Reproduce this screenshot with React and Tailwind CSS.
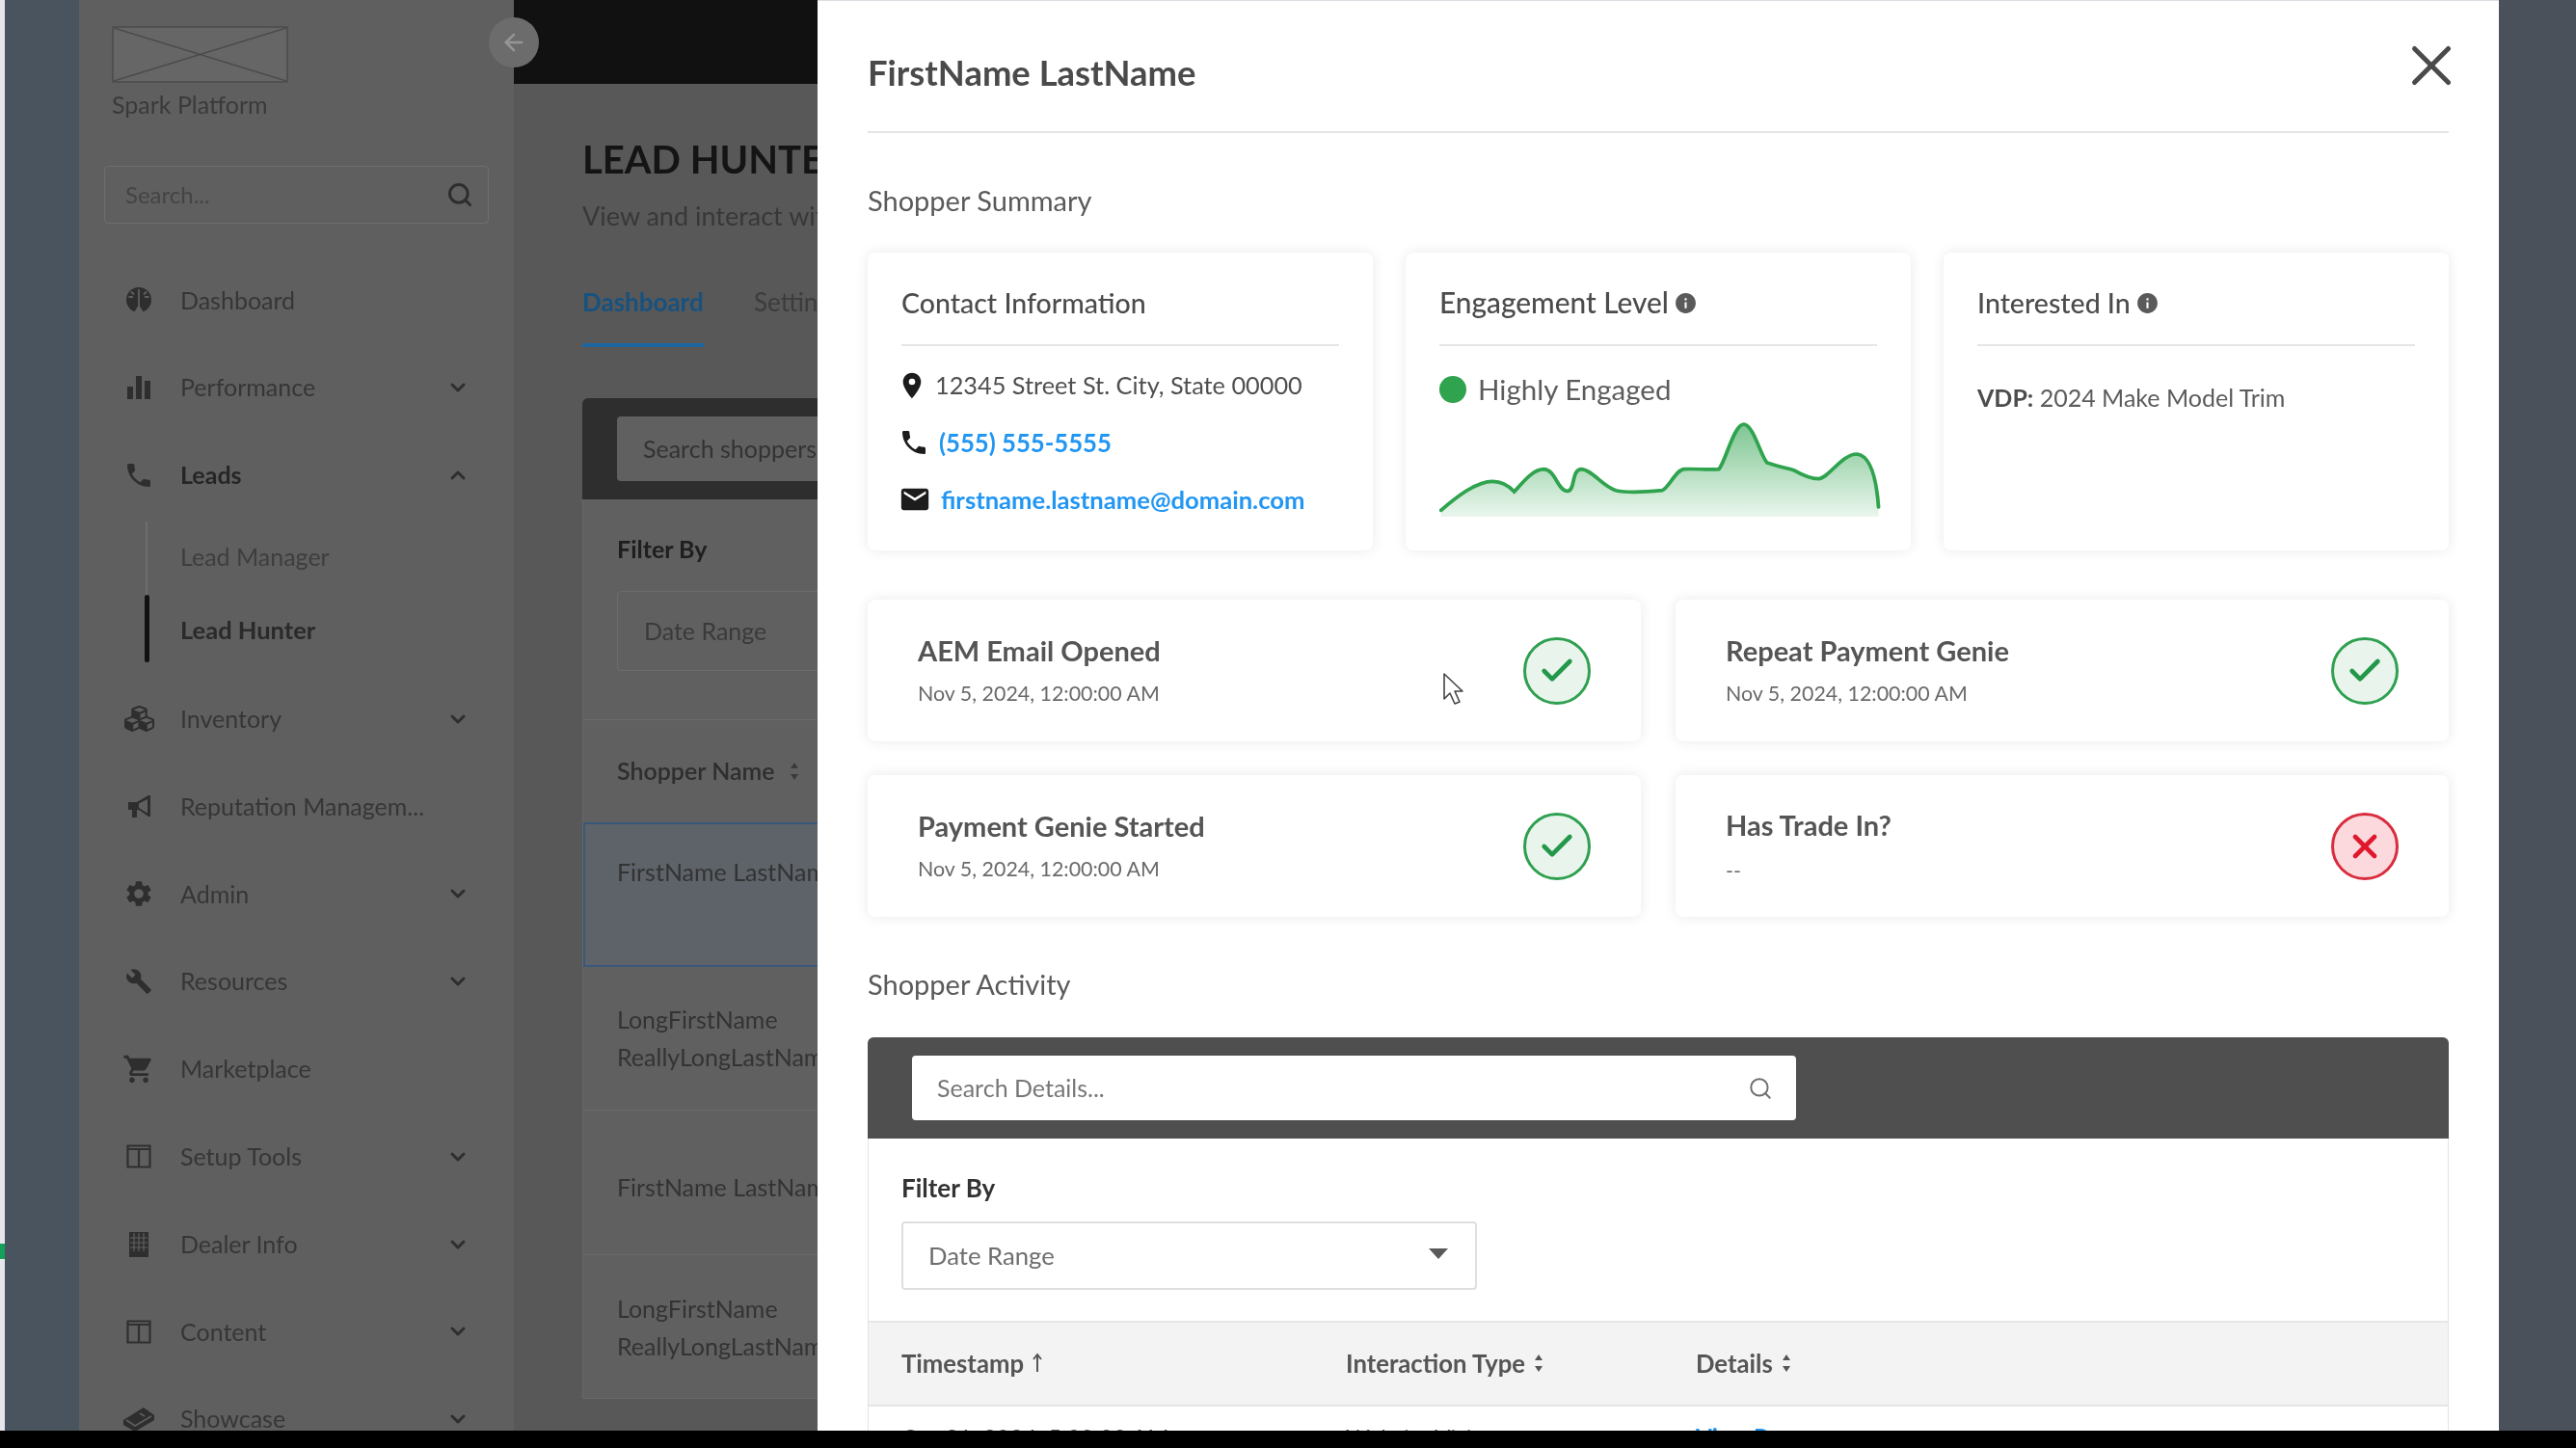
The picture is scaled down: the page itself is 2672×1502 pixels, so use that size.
import React from "react";
import { ChevronDown, ChevronUp, Search, X, ArrowLeft, Check } from "lucide-react";
import { FaCubes } from "react-icons/fa";
import { MdPhone, MdLocationOn, MdEmail, MdInfo, MdSettings, MdBuild, MdShoppingCart } from "react-icons/md";

const GaugeIcon = () => (
  <svg width="28" height="28" viewBox="0 0 28 28">
    <circle cx="14" cy="14" r="13" fill="#2e2e2e" />
    <path d="M14 3 V14 L14 24 M3.5 11 H8 M24.5 11 H20 M6 5.5 L9 8.5 M22 5.5 L19 8.5" stroke="#5f5f5f" strokeWidth="1.8" fill="none" />
    <path d="M9 27 L14 19 L19 27 Z" fill="#5f5f5f" />
  </svg>
);
const BarsIcon = () => (
  <svg width="26" height="26" viewBox="0 0 26 26">
    <path d="M1 12 H7 V25 H1 Z M10 1 H16 V25 H10 Z M19 6 H25 V25 H19 Z" fill="#2e2e2e" />
  </svg>
);
const PhoneIcon = () => <MdPhone size={32} />;
const CubesIcon = () => <FaCubes size={31} />;
const HornIcon = () => (
  <svg width="26" height="26" viewBox="0 0 26 26">
    <path fillRule="evenodd" d="M2 8 H11 L23 1 H25 V23 H23 L13 16 H11 V24 H6 V16 H2 Z M13 9.5 V14 L22 19.5 V5 Z" fill="#2e2e2e" />
  </svg>
);
const CogIcon = () => <MdSettings size={32} />;
const WrenchIcon = () => <MdBuild size={28} />;
const CartIcon = () => <MdShoppingCart size={34} />;
const ColumnsIcon = () => (
  <svg width="26" height="25" viewBox="0 0 26 25">
    <path d="M1.5 1.5 H24.5 V23.5 H1.5 Z M13 4 V23.5 M1.5 5 H24.5" stroke="#303030" strokeWidth="2.2" fill="none" />
  </svg>
);
const BuildingIcon = () => (
  <svg width="22" height="26" viewBox="0 0 22 26">
    <rect x="1" y="0" width="20" height="26" fill="#2e2e2e" />
    <path d="M6 1 V20 M11 1 V20 M16 1 V20 M2 6 H20 M2 11 H20 M2 16 H20" stroke="#5f5f5f" strokeWidth="1.2" />
  </svg>
);
const BoxIcon = () => (
  <svg width="34" height="28" viewBox="0 0 34 28">
    <path d="M1 15 L22 2 L33 10 V15 L13 27 L1 20 Z" fill="#2e2e2e" />
    <path d="M4 15 L13 21 L30 11 M18 8 L23 11" stroke="#5f5f5f" strokeWidth="1.6" fill="none" />
  </svg>
);

function NavRow({ icon: Icon, label, chevron, bold }) {
  return (
    <div className="flex h-[90.8px] w-[382px] shrink-0 items-center">
      <div className="ml-[16px] flex h-[36px] w-[40px] items-center justify-center text-[#2e2e2e]">
        <Icon />
      </div>
      <div className={`ml-[23px] flex-1 text-[25px] whitespace-nowrap ${bold ? "font-bold text-[#262626]" : "text-[#363636]"}`}>{label}</div>
      {chevron === "down" && <ChevronDown size={24} strokeWidth={3} className="mr-[3px] text-[#2e2e2e]" />}
      {chevron === "up" && <ChevronUp size={24} strokeWidth={3} className="mr-[3px] text-[#2e2e2e]" />}
    </div>
  );
}

function Sidebar() {
  return (
    <aside className="flex h-full w-[451px] shrink-0 flex-col overflow-hidden bg-[#5f5f5f] pl-[26px] pt-[27px]">
      <div className="ml-[8px] h-[59px] w-[183px] shrink-0 border-2 border-[#505050] bg-[#666666]">
        <svg className="h-full w-full" viewBox="0 0 183 59" preserveAspectRatio="none">
          <path d="M0 0 L183 59 M183 0 L0 59" stroke="#4a4a4a" strokeWidth="1.5" fill="none" />
        </svg>
      </div>
      <div className="ml-[8px] mt-[6px] h-[32px] shrink-0 text-[25px] leading-[32px] text-[#3a3a3a]">Spark Platform</div>
      <div className="mt-[48px] flex h-[60px] w-[399px] shrink-0 items-center justify-between rounded border border-[#6e6e6e] pl-[21px] pr-[15px]">
        <span className="text-[24px] text-[#444444]">Search...</span>
        <Search size={28} strokeWidth={2.6} className="text-[#2e2e2e]" />
      </div>
      <div className="mt-[34px] shrink-0">
        <NavRow icon={GaugeIcon} label="Dashboard" />
        <NavRow icon={BarsIcon} label="Performance" chevron="down" />
        <NavRow icon={PhoneIcon} label="Leads" chevron="up" bold />
      </div>
      <div className="relative mb-[10px] mt-[3px] h-[149px] w-[382px] shrink-0">
        <div className="ml-[43px] h-[76px] w-[2px] bg-[#6e6e6e]" />
        <div className="ml-[42px] h-[70px] w-[5px] rounded-sm bg-[#111111]" />
        <div className="absolute left-[79px] top-[15px] text-[25px] leading-[42px] text-[#3e3e3e]">Lead Manager</div>
        <div className="absolute left-[79px] top-[91px] text-[25.5px] font-bold leading-[42px] text-[#2a2a2a]">Lead Hunter</div>
      </div>
      <NavRow icon={CubesIcon} label="Inventory" chevron="down" />
      <NavRow icon={HornIcon} label="Reputation Managem..." />
      <NavRow icon={CogIcon} label="Admin" chevron="down" />
      <NavRow icon={WrenchIcon} label="Resources" chevron="down" />
      <NavRow icon={CartIcon} label="Marketplace" />
      <NavRow icon={ColumnsIcon} label="Setup Tools" chevron="down" />
      <NavRow icon={BuildingIcon} label="Dealer Info" chevron="down" />
      <NavRow icon={ColumnsIcon} label="Content" chevron="down" />
      <NavRow icon={BoxIcon} label="Showcase" chevron="down" />
    </aside>
  );
}

function SortArrows({ className = "" }) {
  return (
    <svg width="12" height="22" viewBox="0 0 12 22" className={className}>
      <path d="M6 2 L10 8 H2 Z M6 20 L10 14 H2 Z" fill="currentColor" />
    </svg>
  );
}

function LeadRow({ lines, selected, pad }) {
  return (
    <div className={`h-[149.6px] w-[300px] ${selected ? "border-2 border-[#39587a] bg-[#5d6369] pl-[33px]" : "border-b border-[#6a6a6a] pl-[35px]"}`} style={{ paddingTop: pad }}>
      {lines.map((l) => (
        <div key={l} className="h-[39px] text-[25px] leading-[39px] text-[#333333]">{l}</div>
      ))}
    </div>
  );
}

function MainBehind() {
  return (
    <main className="h-full w-[315px] shrink-0 overflow-hidden bg-[#585858]">
      <div className="h-[87px] w-full bg-[#111111]" />
      <div className="w-[700px] whitespace-nowrap pl-[71px]">
        <div className="mt-[52px] text-[40px] font-bold leading-[52px] text-[#141414]">LEAD HUNTER</div>
        <div className="mt-[15px] text-[27px] leading-[36px] text-[#383838]">View and interact with shoppers</div>
        <div className="mt-[53px] flex items-start gap-[52px] text-[26px] leading-[36px]">
          <div className="w-[126px] border-b-4 border-[#1d659e] pb-[25px] font-bold text-[#17527f]">Dashboard</div>
          <div className="text-[#3c3c3c]">Settings</div>
        </div>
        <div className="mt-[53px] h-[105px] rounded-t-md bg-[#2e2e2e] pl-[36px] pt-[19px]">
          <div className="flex h-[67px] w-[500px] items-center rounded bg-[#606060] pl-[27px] text-[25px] text-[#333333]">Search shoppers...</div>
        </div>
        <div className="border-l border-[#666666] bg-[#606060]">
          <div className="pl-[35px] pt-[35px] text-[25px] font-bold leading-[32px] text-[#1e1e1e]">Filter By</div>
          <div className="ml-[35px] mt-[28px] flex h-[83px] w-[400px] items-center rounded border border-[#6c6c6c] pl-[27px] text-[25px] text-[#3a3a3a]">Date Range</div>
          <div className="mt-[50px] flex h-[107px] items-center border-t border-[#6a6a6a] pl-[35px] text-[25px] font-semibold text-[#2e2e2e]">
            Shopper Name
            <SortArrows className="ml-[14px] text-[#3a3a3a]" />
          </div>
          <LeadRow selected pad={30} lines={["FirstName LastName"]} />
          <LeadRow pad={35} lines={["LongFirstName", "ReallyLongLastName"]} />
          <LeadRow pad={60} lines={["FirstName LastName"]} />
          <LeadRow pad={36} lines={["LongFirstName", "ReallyLongLastName"]} />
        </div>
      </div>
    </main>
  );
}

function SummaryCard({ title, info, size = "text-[28.5px]", children }) {
  return (
    <div className="h-[309px] rounded-lg bg-white px-[35px] pt-[35px] shadow-[0_0_14px_rgba(0,0,0,0.09)]">
      <div className={`flex h-[34px] items-center font-medium leading-[34px] text-[#4c4c4c] ${size}`}>
        {title}
        {info && <MdInfo size={25} className="ml-[5px] text-[#5a5a5a]" />}
      </div>
      <div className="mt-[26px] border-b-2 border-[#e6e6e6]" />
      {children}
    </div>
  );
}

function Status({ ok }) {
  return (
    <div className={`flex h-[70px] w-[70px] items-center justify-center rounded-full border-[3px] ${ok ? "border-[#2fa050] bg-[#e9f5ec] text-[#23974a]" : "border-[#d92c3e] bg-[#fbd9dc] text-[#e0182d]"}`}>
      {ok ? <Check size={40} strokeWidth={2.8} /> : <X size={40} strokeWidth={2.8} />}
    </div>
  );
}

function EventCard({ title, date, ok, dateGap = "mt-[11px]" }) {
  return (
    <div className="flex h-[147px] items-center justify-between rounded-lg bg-white pl-[52px] pr-[52px] shadow-[0_0_14px_rgba(0,0,0,0.09)]">
      <div>
        <div className="h-[36px] text-[29px] font-bold leading-[36px] text-[#555555]">{title}</div>
        <div className={`${dateGap} h-[30px] text-[21.4px] leading-[30px] text-[#6a6a6a]`}>{date}</div>
      </div>
      <Status ok={ok} />
    </div>
  );
}

function Chart() {
  const line = "M155 450 C200 410 260 360 310 360 C340 360 360 375 375 392 C400 365 430 322 465 322 C500 325 505 390 535 390 C560 390 545 322 578 322 C610 325 640 375 680 388 C720 398 780 392 820 388 C840 380 860 325 885 322 C920 320 960 325 990 322 C1010 300 1035 182 1065 182 C1095 185 1115 280 1135 302 C1165 312 1190 318 1215 325 C1240 340 1265 352 1290 352 C1320 350 1360 275 1405 275 C1450 280 1465 370 1470 440";
  return (
    <svg className="mt-[15px]" width="459" height="100" viewBox="150 170 1330 300" preserveAspectRatio="none">
      <defs>
        <linearGradient id="engFill" x1="0" y1="0" x2="0" y2="1">
          <stop offset="0" stopColor="#2fa34e" stopOpacity="0.62" />
          <stop offset="1" stopColor="#2fa34e" stopOpacity="0.1" />
        </linearGradient>
      </defs>
      <path d={`${line} L1470 470 L155 470 Z`} fill="url(#engFill)" />
      <path d={line} fill="none" stroke="#2fa34e" strokeWidth="11" strokeLinecap="round" />
    </svg>
  );
}

function Modal() {
  return (
    <section className="relative flex h-full w-[1744px] shrink-0 flex-col overflow-hidden border-t border-[#dcdde2] bg-white pl-[52px] pr-[52px]">
      <div className="flex h-[137px] shrink-0 items-start justify-between border-b-2 border-[#e4e4e4]">
        <div className="mt-[52px] text-[36.4px] font-bold leading-[44px] text-[#4a4a4a]">FirstName LastName</div>
        <X size={70} strokeWidth={1.7} className="-mr-[17px] mt-[32px] text-[#4a4a4a]" />
      </div>
      <div className="mt-[52px] h-[36px] shrink-0 text-[29px] leading-[36px] text-[#5a5a5a]">Shopper Summary</div>
      <div className="mt-[36px] grid shrink-0 grid-cols-3 gap-[34px]">
        <SummaryCard title="Contact Information">
          <div className="mt-[24px] flex flex-col gap-[25px]">
            <div className="flex h-[34px] items-center text-[#4f4f4f]">
              <MdLocationOn size={32} className="-ml-[5px] text-[#1c1c1c]" />
              <span className="ml-[8px] text-[25.3px]">12345 Street St. City, State 00000</span>
            </div>
            <div className="flex h-[34px] items-center">
              <MdPhone size={32} className="-ml-[3px] text-[#1c1c1c]" />
              <span className="ml-[10px] text-[25.7px] font-bold text-[#2196f3]">(555) 555-5555</span>
            </div>
            <div className="flex h-[34px] items-center">
              <MdEmail size={34} className="-ml-[3px] text-[#1c1c1c]" />
              <span className="ml-[10px] text-[25.6px] font-bold text-[#2196f3]">firstname.lastname@domain.com</span>
            </div>
          </div>
        </SummaryCard>
        <SummaryCard title="Engagement Level" info size="text-[29.8px]">
          <div className="mt-[28px] flex h-[34px] items-center">
            <div className="h-[28px] w-[28px] rounded-full bg-[#2fa34e]" />
            <span className="ml-[12px] text-[29.5px] text-[#5c5c5c]">Highly Engaged</span>
          </div>
          <Chart />
        </SummaryCard>
        <SummaryCard title="Interested In" info>
          <div className="mt-[36px] h-[34px] text-[25px] leading-[34px] text-[#5c5c5c]">
            <span className="font-bold text-[#4c4c4c]">VDP:</span> 2024 Make Model Trim
          </div>
        </SummaryCard>
      </div>
      <div className="mt-[51px] grid shrink-0 grid-cols-2 gap-x-[36px] gap-y-[35px]">
        <EventCard title="AEM Email Opened" date="Nov 5, 2024, 12:00:00 AM" ok />
        <EventCard title="Repeat Payment Genie" date="Nov 5, 2024, 12:00:00 AM" ok />
        <EventCard title="Payment Genie Started" date="Nov 5, 2024, 12:00:00 AM" ok />
        <EventCard title="Has Trade In?" date="--" ok={false} dateGap="mt-[14px]" />
      </div>
      <div className="mt-[52px] h-[36px] shrink-0 text-[29px] leading-[36px] text-[#5a5a5a]">Shopper Activity</div>
      <div className="mt-[37px] h-[105px] shrink-0 rounded-t-md bg-[#4f4f4f] pl-[46px] pt-[19px]">
        <div className="flex h-[67px] w-[917px] items-center justify-between rounded bg-white pl-[26px] pr-[24px]">
          <span className="text-[25px] text-[#777777]">Search Details...</span>
          <Search size={26} strokeWidth={1.8} className="text-[#6e6e6e]" />
        </div>
      </div>
      <div className="flex-1 border-x border-[#e4e4e4]">
        <div className="ml-[34px] mt-[36px] h-[30px] text-[26px] font-bold leading-[30px] text-[#333333]">Filter By</div>
        <div className="ml-[34px] mt-[20px] flex h-[71px] w-[597px] items-center justify-between rounded border-2 border-[#dfdfdf] pl-[26px] pr-[28px]">
          <span className="text-[25.7px] text-[#6e6e6e]">Date Range</span>
          <svg width="20" height="12" viewBox="0 0 20 12" className="-mt-[4px]"><path d="M0 0 H20 L10 11 Z" fill="#5a5a5a" /></svg>
        </div>
        <div className="mt-[32px] flex h-[89px] items-center border-y-2 border-[#e6e6e6] bg-[#f3f3f3] pl-[34px] text-[25.7px] font-bold text-[#555555]">
          <div className="flex w-[461px] items-center">
            Timestamp
            <svg width="12" height="22" viewBox="0 0 12 22" className="ml-[8px]"><path d="M6 20 V3 M2 7 L6 2 L10 7" stroke="#555555" strokeWidth="2" fill="none" /></svg>
          </div>
          <div className="flex w-[363px] items-center">
            Interaction Type
            <SortArrows className="ml-[8px]" />
          </div>
          <div className="flex items-center">
            Details
            <SortArrows className="ml-[8px]" />
          </div>
        </div>
        <div className="flex pl-[34px] pt-[17px] text-[24px] leading-[30px] text-[#5a5a5a]">
          <div className="w-[461px]">Oct 31, 2024, 5:00:00 AM</div>
          <div className="w-[363px]">Website Visit</div>
          <div className="font-bold text-[#2196f3]">View Page</div>
        </div>
      </div>
      <svg className="absolute left-[648px] top-[696px]" width="24" height="36" viewBox="0 0 24 36">
        <path d="M2 2 L2 28 L8 22 L13 33 L18 31 L13 20 L21 20 Z" fill="#ffffff" stroke="#444444" strokeWidth="1.6" strokeLinejoin="round" />
      </svg>
    </section>
  );
}

export default function App() {
  return (
    <div className="relative h-[1502px] w-[2672px] overflow-hidden bg-black blur-[0.6px] [font-family:Lato,'Noto_Sans',sans-serif]">
      <div className="relative flex h-[1484px]">
        <div className="h-full w-[5px] shrink-0 bg-[#e6e7ea] pt-[1290px]">
          <div className="h-[16px] w-full bg-[#12a05a]" />
        </div>
        <div className="h-full w-[77px] shrink-0 bg-[#4a545e]" />
        <Sidebar />
        <MainBehind />
        <Modal />
        <div className="h-full flex-1 bg-[#4a515b]" />
        <div className="absolute left-[507px] top-[18px] flex h-[52px] w-[52px] items-center justify-center rounded-full bg-[#6c6c6c] text-[#959595]">
          <ArrowLeft size={28} strokeWidth={2.2} />
        </div>
      </div>
    </div>
  );
}
